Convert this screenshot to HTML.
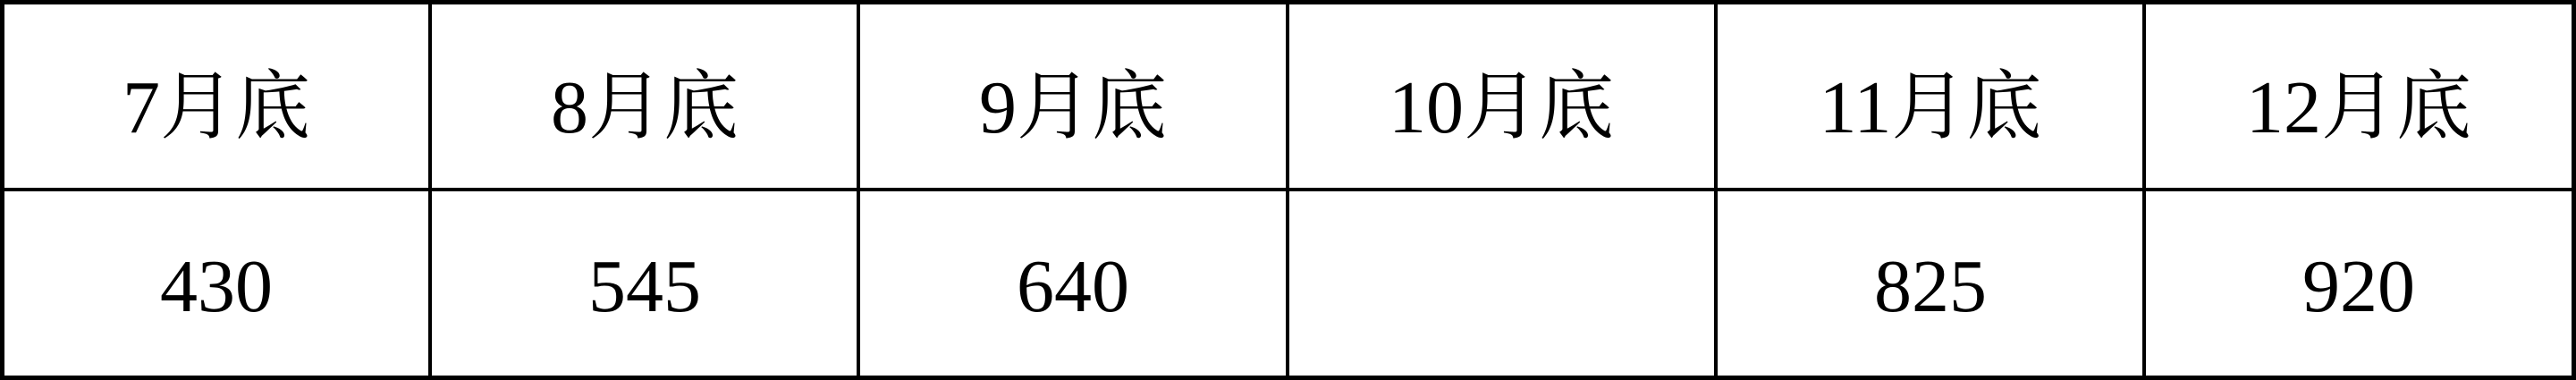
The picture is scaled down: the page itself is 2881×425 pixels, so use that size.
<!DOCTYPE html>
<html><head><meta charset="utf-8"><style>html,body{margin:0;padding:0;background:#fff;width:2881px;height:425px;overflow:hidden}</style></head>
<body>
<svg width="2881" height="425" xmlns="http://www.w3.org/2000/svg">
<rect width="2881" height="425" fill="#fff"/>
<g fill="#000">
<rect x="0" y="0" width="2881" height="5"/>
<rect x="0" y="420" width="2881" height="5"/>
<rect x="0" y="0" width="5" height="425"/>
<rect x="2876" y="0" width="5" height="425"/>
<rect x="0" y="210" width="2881" height="4"/>
<rect x="479" y="0" width="4" height="425"/>
<rect x="958" y="0" width="4" height="425"/>
<rect x="1438" y="0" width="4" height="425"/>
<rect x="1917" y="0" width="4" height="425"/>
<rect x="2396" y="0" width="4" height="425"/>
</g>
<g font-family="'Liberation Serif','Noto Serif CJK SC',serif" font-size="84" text-anchor="middle" fill="#000">
<text x="242" y="148">7月底</text>
<text x="721" y="148">8月底</text>
<text x="1200" y="148">9月底</text>
<text x="1679" y="148">10月底</text>
<text x="2159" y="148">11月底</text>
<text x="2638" y="148">12月底</text>
<text x="242" y="348">430</text>
<text x="721" y="348">545</text>
<text x="1200" y="348">640</text>
<text x="2159" y="348">825</text>
<text x="2638" y="348">920</text>
</g>
</svg>
</body></html>
